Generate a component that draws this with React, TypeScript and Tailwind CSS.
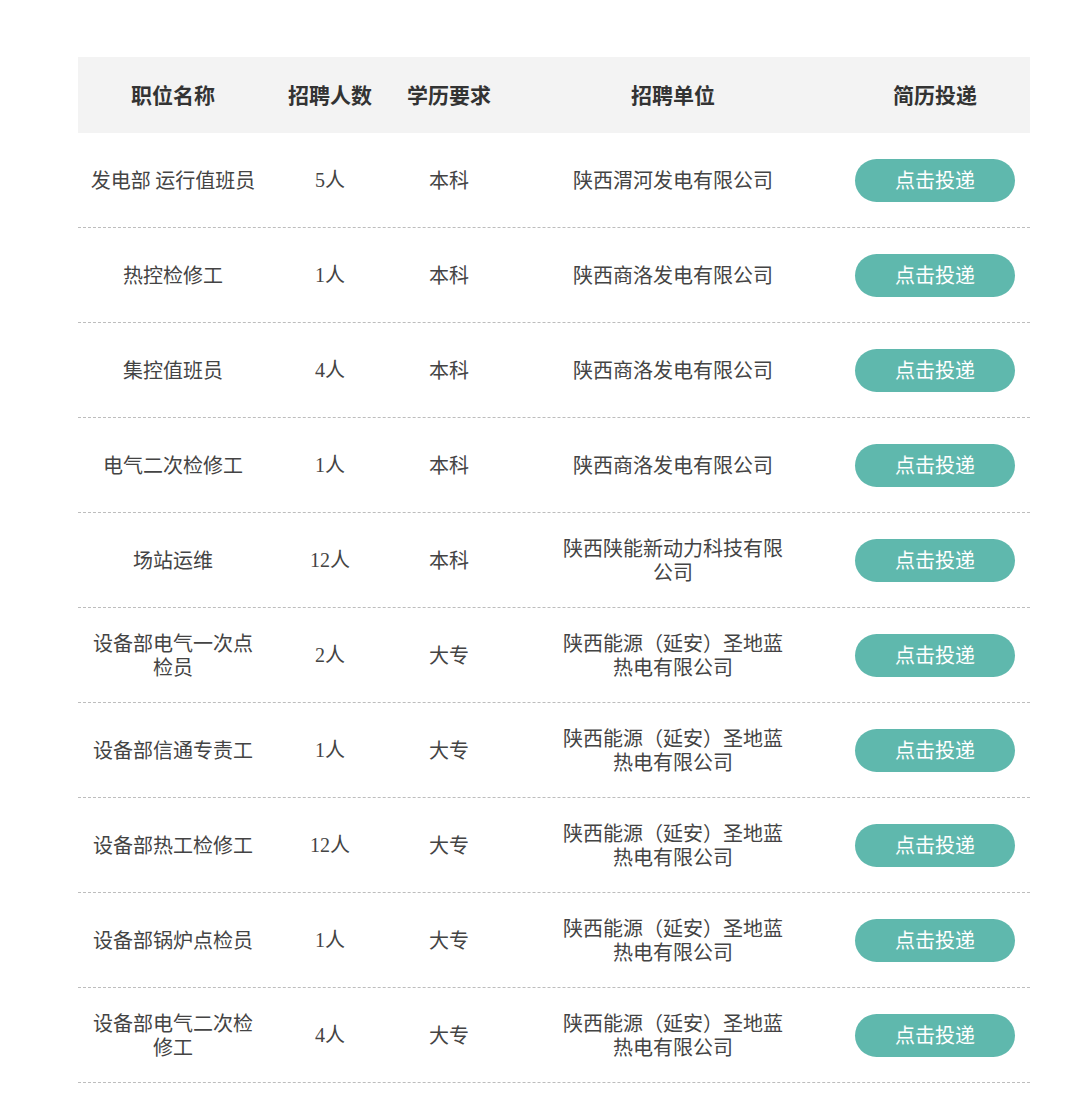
const rows = [
  ["发电部 运行值班员", "5人", "本科", "陕西渭河发电有限公司"],
  ["热控检修工", "1人", "本科", "陕西商洛发电有限公司"],
  ["集控值班员", "4人", "本科", "陕西商洛发电有限公司"],
  ["电气二次检修工", "1人", "本科", "陕西商洛发电有限公司"],
  ["场站运维", "12人", "本科", "陕西陕能新动力科技有限公司"],
  ["设备部电气一次点检员", "2人", "大专", "陕西能源（延安）圣地蓝热电有限公司"],
  ["设备部信通专责工", "1人", "大专", "陕西能源（延安）圣地蓝热电有限公司"],
  ["设备部热工检修工", "12人", "大专", "陕西能源（延安）圣地蓝热电有限公司"],
  ["设备部锅炉点检员", "1人", "大专", "陕西能源（延安）圣地蓝热电有限公司"],
  ["设备部电气二次检修工", "4人", "大专", "陕西能源（延安）圣地蓝热电有限公司"],
];

export default function App() {
  return (
    <div
      className="bg-white min-h-[1109px] pt-[57px] px-[78px] text-[#333]"
      style={{ fontFamily: '"Noto Sans CJK SC", sans-serif' }}
    >
      <div className="w-[952px]">
        <div className="flex h-[76px] items-center bg-[#f3f3f3] text-[21px] font-bold">
          <div className="w-[190px] text-center">职位名称</div>
          <div className="w-[124px] text-center">招聘人数</div>
          <div className="w-[114px] text-center">学历要求</div>
          <div className="w-[334px] text-center">招聘单位</div>
          <div className="w-[190px] text-center">简历投递</div>
        </div>
        {rows.map((r, i) => (
          <div
            key={i}
            className="flex h-[95px] items-center border-b border-dashed border-[#bdbdbd] text-[20px] leading-[24px] text-[#444]"
          >
            <div className="w-[190px] px-[9px] text-center">{r[0]}</div>
            <div
              className="w-[124px] text-center"
              style={{ fontFamily: '"Liberation Serif", "Noto Sans CJK SC", serif' }}
            >
              {r[1]}
            </div>
            <div className="w-[114px] text-center">{r[2]}</div>
            <div className="w-[334px] px-[50px] text-center">{r[3]}</div>
            <div className="w-[190px] flex justify-center">
              <button className="w-[160px] h-[43px] rounded-full bg-[#5fb8ad] text-white text-[20px]">
                点击投递
              </button>
            </div>
          </div>
        ))}
      </div>
    </div>
  );
}
